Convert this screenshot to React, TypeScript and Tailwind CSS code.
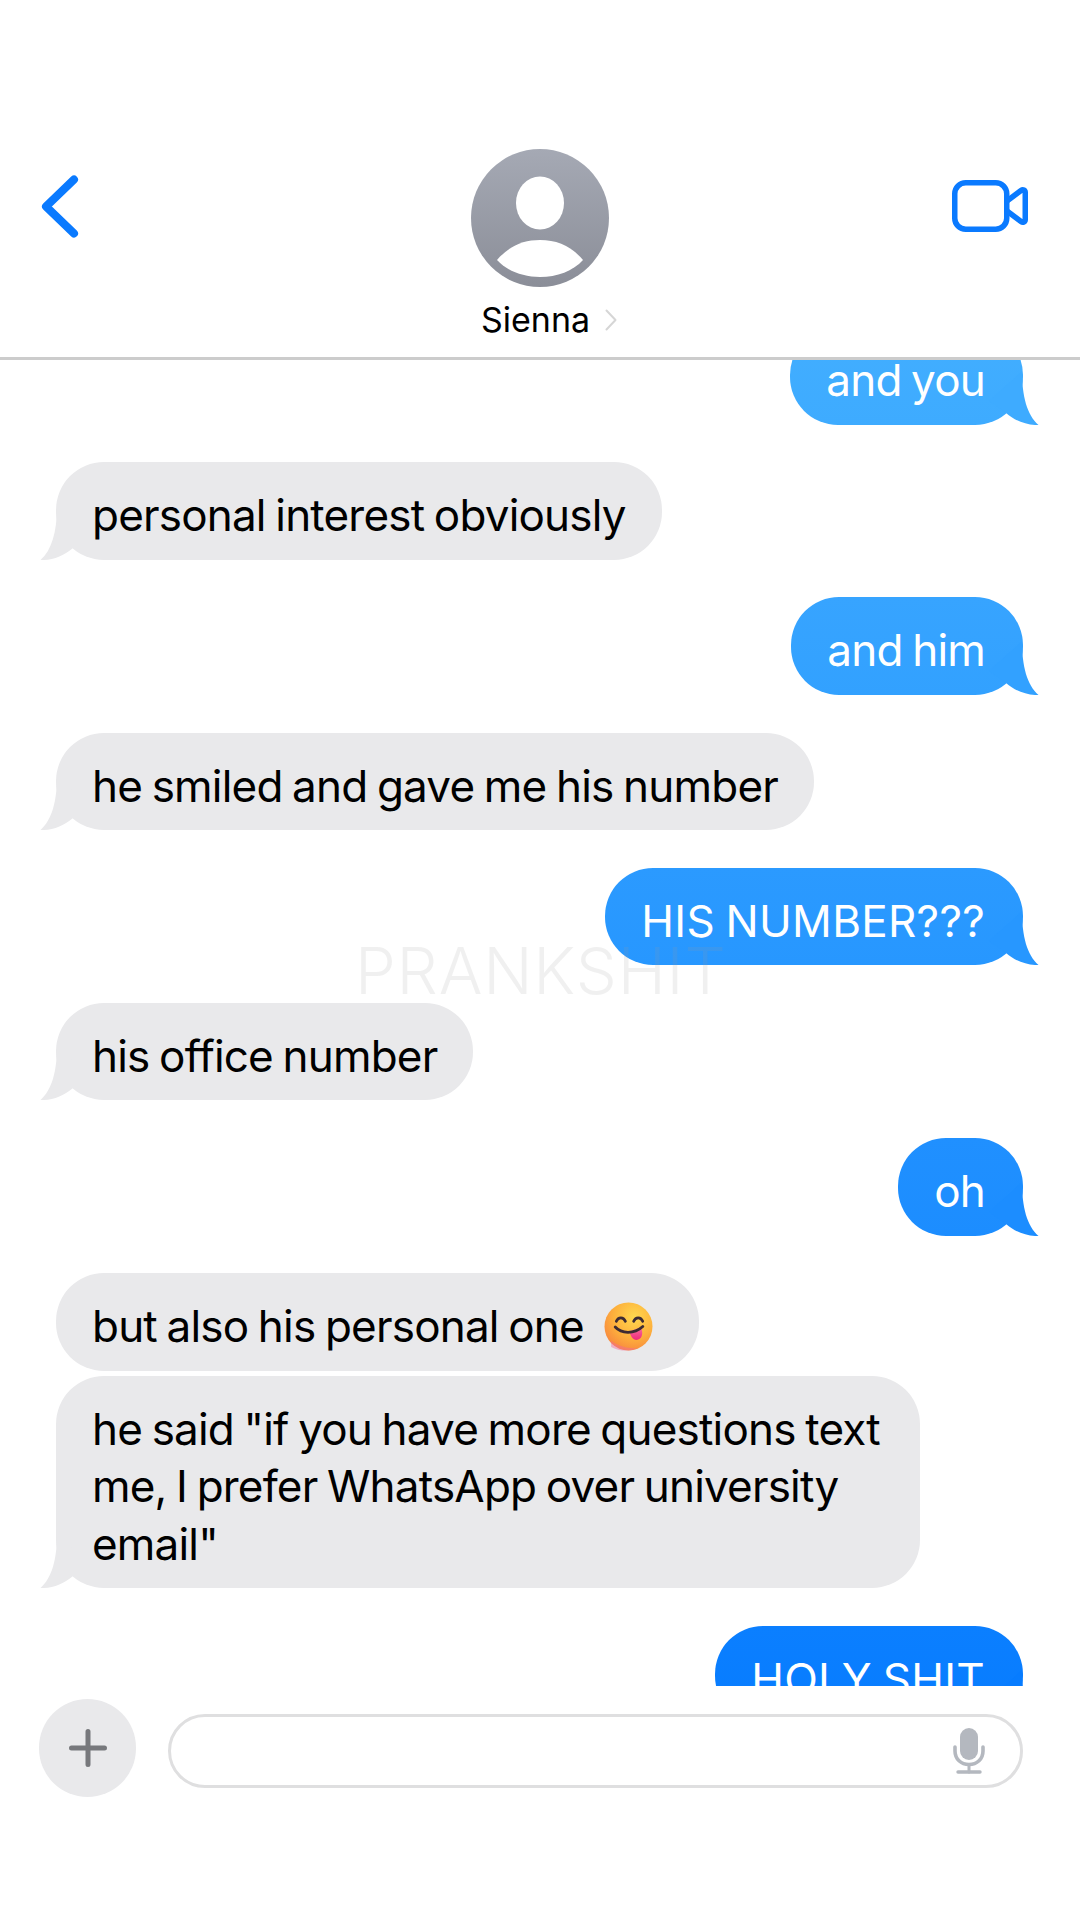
type Message = {
  id: string
  text: string
  sent?: boolean
  bubble?: string
  tail?: string
  gap: string
  noTail?: boolean
  emoji?: boolean
  caps?: boolean
}

const messages: Message[] = [
  { id: "m1", text: "and you", sent: true, bubble: "from-[#42aeff] to-[#3eabff]", tail: "fill-[#3eabff]", gap: "-mt-[33px]" },
  { id: "m2", text: "personal interest obviously", gap: "mt-[37.7px]" },
  { id: "m3", text: "and him", sent: true, bubble: "from-[#37a4ff] to-[#32a1ff]", tail: "fill-[#32a1ff]", gap: "mt-[37.7px]" },
  { id: "m4", text: "he smiled and gave me his number", gap: "mt-[37.7px]" },
  { id: "m5", text: "HIS NUMBER???", sent: true, caps: true, bubble: "from-[#2b9aff] to-[#2797ff]", tail: "fill-[#2797ff]", gap: "mt-[37.7px]" },
  { id: "m6", text: "his office number", gap: "mt-[37.7px]" },
  { id: "m7", text: "oh", sent: true, bubble: "from-[#2090ff] to-[#1c8dff]", tail: "fill-[#1c8dff]", gap: "mt-[37.7px]" },
  { id: "m8", text: "but also his personal one", gap: "mt-[37.7px]", noTail: true, emoji: true },
  {
    id: "m9",
    text: 'he said "if you have more questions text me, I prefer WhatsApp over university email"',
    gap: "mt-[5px]",
  },
  { id: "m10", text: "HOLY SHIT", sent: true, caps: true, bubble: "from-[#0b7fff] to-[#077cff]", tail: "fill-[#077cff]", gap: "mt-[37.7px]" },
]

function Tail({ sent, fill }: { sent?: boolean; fill?: string }) {
  return (
    <svg
      viewBox="0 0 50 54"
      className={`absolute bottom-0 w-[50px] h-[54px] ${sent ? "right-[-16px]" : "left-[-16px] -scale-x-100"} ${fill ?? "fill-[#e9e9eb]"}`}
    >
      <path d="M33 0 C33 25 38 44 49.5 54 C38 54.5 26 50 17 42 L0 30 Z" />
    </svg>
  )
}

function TongueEmoji() {
  return (
    <svg viewBox="0 0 48 48" className="inline-block w-[49px] h-[49px] ml-[20px] mr-[10px] align-[-9px]">
      <defs>
        <radialGradient id="face" cx="0.62" cy="0.3" r="0.8">
          <stop offset="0" stopColor="#ffd84f" />
          <stop offset="0.55" stopColor="#fdb03c" />
          <stop offset="1" stopColor="#f7803f" />
        </radialGradient>
        <linearGradient id="tongue" x1="0" y1="0" x2="0" y2="1">
          <stop offset="0" stopColor="#f96d9c" />
          <stop offset="1" stopColor="#ee2a7c" />
        </linearGradient>
      </defs>
      <circle cx="24" cy="24" r="23.5" fill="url(#face)" />
      <path d="M7 44 C14 48 26 49 33 45 C26 46 14 44 7 38 Z" fill="#f2689b" opacity="0.45" />
      <path d="M12 19 C14 14.5 19 14.5 21 19" fill="none" stroke="#3d2b33" strokeWidth="2.6" strokeLinecap="round" />
      <path d="M29 19 C31 14.5 36 14.5 38 19" fill="none" stroke="#3d2b33" strokeWidth="2.6" strokeLinecap="round" />
      <path d="M25 29 C29 27 33 26 36 25 C38.5 29 38 36 33 37 C29 38 26 34 25 29 Z" fill="url(#tongue)" />
      <path d="M11 24.5 C17 31 29 32 38 24" fill="none" stroke="#3d2b33" strokeWidth="2.8" strokeLinecap="round" />
    </svg>
  )
}

function Bubble({ message }: { message: Message }) {
  const { sent, text, bubble, tail, gap, noTail, emoji, caps } = message
  return (
    <div className={`flex ${sent ? "justify-end pr-[57px]" : "justify-start pl-[56px]"} ${gap}`}>
      <div
        className={`relative max-w-[864px] rounded-[48px] pl-[36px] pt-[25px] pb-[15px] text-[44px] leading-[57.5px] [word-spacing:-2px] ${
          caps ? "tracking-[0.3px]" : "tracking-[-0.8px]"
        } ${sent ? `pr-[38px] bg-linear-to-b ${bubble} text-white` : "pr-[36px] bg-[#e9e9eb] text-black"}`}
      >
        {!noTail && <Tail sent={sent} fill={tail} />}
        <span className="relative">
          {text}
          {emoji && <TongueEmoji />}
        </span>
      </div>
    </div>
  )
}

function Header() {
  return (
    <header className="h-[360px] shrink-0 border-b-[3px] border-[#cccccc] grid grid-cols-[1fr_auto_1fr] bg-white">
      <div className="pl-[41px] pt-[175px]">
        <svg viewBox="0 0 38 63" className="w-[38px] h-[63px]" fill="none" stroke="#0a7aff" strokeWidth="8" strokeLinecap="round" strokeLinejoin="round">
          <path d="M33 4.5 L5 31.5 L33 58.5" />
        </svg>
      </div>
      <div className="pt-[149px] flex flex-col items-center">
        <svg viewBox="0 0 138 138" className="w-[138px] h-[138px]">
          <defs>
            <linearGradient id="avatar" x1="0" y1="0" x2="0" y2="1">
              <stop offset="0" stopColor="#a5a9b4" />
              <stop offset="1" stopColor="#8b8e98" />
            </linearGradient>
          </defs>
          <circle cx="69" cy="69" r="69" fill="url(#avatar)" />
          <ellipse cx="69" cy="54" rx="24" ry="26.5" fill="#ffffff" />
          <path d="M26 111 C38 97 52 91 69 91 C86 91 100 97 112 111 C102 122 86 128 69 128 C52 128 36 122 26 111 Z" fill="#ffffff" />
        </svg>
        <div className="mt-[13px] ml-[18px] flex items-center gap-[15px] text-[34px] leading-[40px] text-black">
          <span>Sienna</span>
          <svg viewBox="0 0 12 22" className="w-[12px] h-[22px]" fill="none" stroke="#d6d6d6" strokeWidth="2" strokeLinecap="round" strokeLinejoin="round">
            <path d="M1.5 1.5 L10.5 11 L1.5 20.5" />
          </svg>
        </div>
      </div>
      <div className="flex justify-end pr-[52px] pt-[180px]">
        <svg viewBox="0 0 76 52" className="w-[76px] h-[52px]" fill="none" stroke="#0a7aff" strokeWidth="5.5" strokeLinejoin="round" strokeLinecap="round">
          <rect x="2.75" y="2.75" width="52" height="46.5" rx="11" />
          <path d="M55 21 L69 10.5 C71 9 73.25 10 73.25 12.5 V39.5 C73.25 42 71 43 69 41.5 L55 31" />
        </svg>
      </div>
    </header>
  )
}

function Composer() {
  return (
    <footer className="flex-1 flex items-start gap-[32px] pl-[39px] pr-[57px] pt-[13px] bg-white">
      <div className="w-[97px] h-[98px] shrink-0 rounded-full bg-[#e9e9eb] flex items-center justify-center">
        <svg viewBox="0 0 38 38" className="w-[38px] h-[38px]" stroke="#77787c" strokeWidth="5" strokeLinecap="round">
          <path d="M19 2.5 V35.5 M2.5 19 H35.5" />
        </svg>
      </div>
      <div className="mt-[15px] flex-1 h-[74px] rounded-full border-[3px] border-[#dfdfe0] flex items-center justify-end pr-[35px]">
        <svg viewBox="0 0 32 46" className="w-[32px] h-[46px]" fill="none" stroke="#b4b8bf" strokeLinecap="round">
          <rect x="7" y="0" width="18" height="32" rx="9" fill="#b4b8bf" stroke="none" />
          <path d="M2 19 V23 C2 31 8 36.5 16 36.5 C24 36.5 30 31 30 23 V19" strokeWidth="3.6" />
          <path d="M16 37 V44" strokeWidth="3" />
          <path d="M5 44 H27" strokeWidth="3.4" />
        </svg>
      </div>
    </footer>
  )
}

export default function App() {
  return (
    <div
      className="relative w-[1080px] h-[1920px] flex flex-col bg-white overflow-hidden"
      style={{ fontFamily: "Inter, 'Noto Sans', sans-serif" }}
    >
      <Header />
      <main className="h-[1326px] shrink-0 overflow-hidden">
        {messages.map((message) => (
          <Bubble key={message.id} message={message} />
        ))}
      </main>
      <Composer />
      <div className="absolute left-[355px] top-[932px] text-[65px] leading-[77px] font-light tracking-[0.8px] text-[#999999]/15 pointer-events-none">
        PRANKSHIT
      </div>
    </div>
  )
}
